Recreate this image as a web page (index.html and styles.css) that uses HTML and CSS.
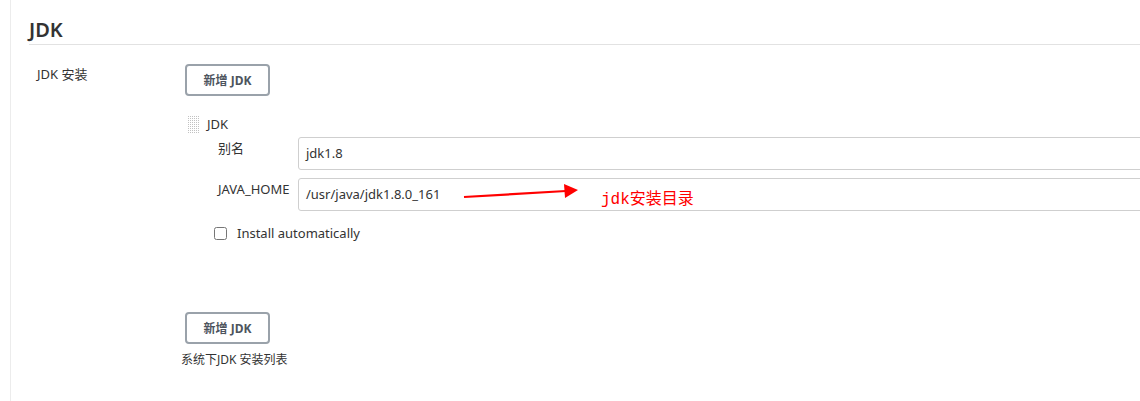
FILE: index.html
```html
<!DOCTYPE html>
<html>
<head>
<meta charset="utf-8">
<link rel="stylesheet" href="styles.css">
</head>
<body>
<div class="page">
  <h2 class="section-title">JDK</h2>
  <div class="row">
    <div class="row-label">JDK 安装</div>
    <div class="row-control">
      <button class="btn">新增 JDK</button>
      <div class="repeat">
        <div class="repeat-head">
          <span class="grip"></span>
          <span class="repeat-title">JDK</span>
        </div>
        <div class="field">
          <div class="field-label">别名</div>
          <div class="input">jdk1.8</div>
        </div>
        <div class="field">
          <div class="field-label">JAVA_HOME</div>
          <div class="input">/usr/java/jdk1.8.0_161</div>
        </div>
        <label class="check"><input type="checkbox"><span>Install automatically</span></label>
      </div>
      <button class="btn btn-bottom">新增 JDK</button>
      <div class="caption">系统下JDK 安装列表</div>
    </div>
  </div>
</div>
<svg class="annot" width="140" height="30" viewBox="0 0 140 30">
  <path d="M2 16 L104 10" stroke="#f00" stroke-width="2.2" fill="none"/>
  <polygon points="102,3 116,9 103,17" fill="#f00"/>
</svg>
<div class="annot-text">jdk安装目录</div>
</body>
</html>
```
FILE: styles.css
```css
html, body {
  margin: 0;
  padding: 0;
  overflow: hidden;
  background: #fff;
}
body {
  width: 1140px;
  height: 401px;
  position: relative;
  font-family: "Segoe UI", "Noto Sans", "Noto Sans CJK SC", sans-serif;
  color: #333;
  font-size: 13px;
}
.page {
  margin-left: 10px;
  border-left: 1px solid #ececec;
  padding-left: 18px;
  height: 401px;
  box-sizing: border-box;
}
.section-title {
  margin: 0;
  padding-top: 16px;
  font-size: 20px;
  font-weight: 600;
  line-height: 28px;
  color: #333;
  border-bottom: 1px solid #e2e2e2;
  height: 28px;
}
.row {
  display: grid;
  grid-template-columns: 156px 1fr;
  padding-top: 19px;
}
.row-label {
  padding-left: 8px;
  padding-top: 1px;
  line-height: 18px;
}
.btn {
  display: block;
  width: 85px;
  height: 32px;
  border: 2px solid #9aa2aa;
  border-radius: 4px;
  background: #fff;
  color: #4d545d;
  font-family: inherit;
  font-size: 12px;
  font-weight: 700;
  padding: 0;
  box-sizing: border-box;
}
.repeat {
  padding-top: 18px;
}
.repeat-head {
  display: flex;
  align-items: center;
  height: 20px;
}
.grip {
  width: 12px;
  height: 19px;
  margin-left: 2px;
  margin-right: 8px;
  background-image:
    linear-gradient(#fff 1px, transparent 1px),
    linear-gradient(90deg, #fff 1px, #c2c2c2 1px);
  background-size: 2px 2px;
}
.repeat-title {
  line-height: 18px;
}
.field {
  display: grid;
  grid-template-columns: 80px 860px;
  margin-left: 33px;
  margin-top: 8px;
}
.repeat-head + .field {
  margin-top: 3px;
}
.field-label {
  padding-top: 2px;
  line-height: 18px;
}
.input {
  height: 33px;
  box-sizing: border-box;
  border: 1px solid #cfcfcf;
  border-radius: 3px;
  padding: 0 7px;
  line-height: 31px;
  font-size: 13px;
  color: #333;
}
.check {
  display: flex;
  align-items: center;
  margin-left: 27px;
  margin-top: 12px;
  height: 20px;
}
.check input {
  margin: 0 10px 0 2px;
  width: 13px;
  height: 13px;
}
.btn-bottom {
  margin-top: 69px;
}
.caption {
  margin-left: -4px;
  margin-top: 8px;
  font-size: 12px;
  line-height: 16px;
}
.annot {
  position: absolute;
  left: 462px;
  top: 181px;
}
.annot-text {
  position: absolute;
  left: 601px;
  top: 190px;
  font-family: "Liberation Mono", "Noto Sans CJK SC", monospace;
  font-size: 16px;
  color: #f00;
  line-height: 20px;
}
```
